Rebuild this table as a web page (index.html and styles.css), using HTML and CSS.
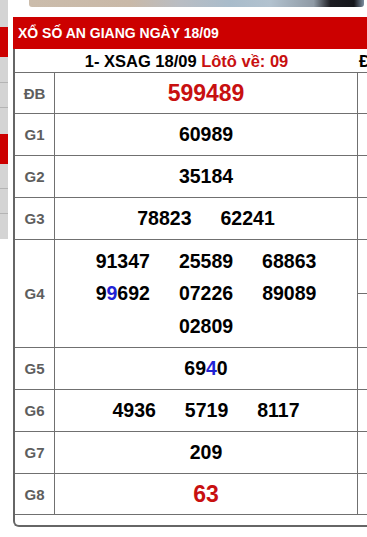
FILE: index.html
```html
<!DOCTYPE html>
<html lang="vi">
<head>
<meta charset="utf-8">
<title>XSAG 18/09</title>
<link rel="stylesheet" href="styles.css">
</head>
<body>
<div class="page">
  <aside class="side">
    <div class="side-item h27"></div>
    <div class="side-item red h30"></div>
    <div class="side-item h26 line"></div>
    <div class="side-item h25 line"></div>
    <div class="side-item h26"></div>
    <div class="side-item red h30"></div>
    <div class="side-item h25 line"></div>
    <div class="side-item h25 line"></div>
    <div class="side-item h25"></div>
  </aside>
  <main class="main">
    <div class="photo"></div>
    <section class="result">
      <h2 class="result-title">XỔ SỐ AN GIANG NGÀY 18/09</h2>
      <div class="result-body">
        <div class="grid">
          <div class="sub">1- XSAG 18/09 <span class="red-text">Lôtô về: 09</span></div>
          <div class="sub-side">Đầu</div>

          <div class="label">ĐB</div>
          <div class="nums"><span class="special">599489</span></div>
          <div class="extra"></div>

          <div class="label">G1</div>
          <div class="nums"><span>60989</span></div>
          <div class="extra"></div>

          <div class="label">G2</div>
          <div class="nums"><span>35184</span></div>
          <div class="extra"></div>

          <div class="label">G3</div>
          <div class="nums"><span>78823</span><span>62241</span></div>
          <div class="extra"></div>

          <div class="label">G4</div>
          <div class="nums stack">
            <div class="line4"><span>91347</span><span>25589</span><span>68863</span></div>
            <div class="line4"><span>9<b class="blue">9</b>692</span><span>07226</span><span>89089</span></div>
            <div class="line4"><span>02809</span></div>
          </div>
          <div class="extra split"><div class="extra-top"></div><div class="extra-bottom"></div></div>

          <div class="label">G5</div>
          <div class="nums"><span>69<b class="blue">4</b>0</span></div>
          <div class="extra"></div>

          <div class="label">G6</div>
          <div class="nums"><span>4936</span><span>5719</span><span>8117</span></div>
          <div class="extra"></div>

          <div class="label">G7</div>
          <div class="nums"><span>209</span></div>
          <div class="extra"></div>

          <div class="label">G8</div>
          <div class="nums"><span class="special">63</span></div>
          <div class="extra"></div>
        </div>
      </div>
    </section>
  </main>
</div>
</body>
</html>
```

FILE: styles.css
```css
html, body {
  margin: 0;
  padding: 0;
  overflow: hidden;
  background: #ffffff;
}

body {
  font-family: "Liberation Sans", Arial, sans-serif;
  width: 367px;
  height: 537px;
}

.page {
  display: flex;
  align-items: flex-start;
  gap: 5px;
}

.side {
  width: 8px;
  flex: none;
  display: flex;
  flex-direction: column;
}

.side-item {
  background: #d4d4d4;
  box-sizing: border-box;
}

.side-item.red { background: #cc0000; }
.side-item.line { border-bottom: 1px solid #b4b4b4; }
.h25 { height: 25px; }
.h26 { height: 26px; }
.h27 { height: 27px; }
.h30 { height: 30px; }

.main {
  flex: 1;
  min-width: 0;
}

.photo {
  margin-left: 16px;
  width: 335px;
  height: 7px;
  margin-bottom: 10px;
  border-radius: 0 0 3px 3px;
  background: linear-gradient(90deg,
    #cbbcab 0%,
    #c9b9a8 30%,
    #b9bdc3 45%,
    #a9bccb 60%,
    #b2c2cf 72%,
    #8f9aa5 85%,
    #1c1d22 90%,
    #15161b 97%,
    #7c8ea0 100%);
}

.result-title {
  margin: 0;
  height: 32px;
  line-height: 33px;
  background: #cc0000;
  color: #ffffff;
  font-size: 14px;
  font-weight: bold;
  padding-left: 5px;
  white-space: nowrap;
}

.result-body {
  border-left: 2px solid #666666;
  border-bottom: 2px solid #666666;
  border-bottom-left-radius: 6px;
  padding-bottom: 10px;
}

.grid {
  display: grid;
  grid-template-columns: 40px 303px minmax(0, 1fr);
  grid-template-rows: 24px 41px 42px 42px 42px 108px 42px 42px 42px 41px;
}

.grid > div {
  box-sizing: border-box;
  border-bottom: 1px solid #707070;
}

.sub {
  grid-column: 1 / 3;
  display: flex;
  align-items: center;
  justify-content: center;
  font-size: 16.5px;
  font-weight: bold;
  color: #000000;
  white-space: pre;
  padding-top: 1px;
}

.red-text { color: #c81010; }

.sub-side {
  overflow: hidden;
  white-space: nowrap;
  font-size: 16.5px;
  font-weight: bold;
  padding-left: 1px;
  padding-top: 3px;
  color: #000000;
}

.label {
  border-right: 1px solid #707070;
  display: flex;
  align-items: center;
  justify-content: center;
  font-size: 15px;
  font-weight: bold;
  color: #5e5e5e;
}

.nums {
  border-right: 1px solid #707070;
  display: flex;
  align-items: center;
  justify-content: center;
  gap: 29px;
  font-size: 19.5px;
  font-weight: bold;
  color: #000000;
}

.nums b { font-weight: bold; }

.nums .special {
  font-size: 23px;
  color: #c81010;
}

.blue { color: #2222d4; }

.nums.stack {
  flex-direction: column;
  gap: 0;
}

.line4 {
  display: flex;
  justify-content: center;
  gap: 29px;
  height: 32.5px;
  line-height: 32.5px;
}

.extra.split {
  display: flex;
  flex-direction: column;
}

.extra-top {
  height: 54px;
  box-sizing: border-box;
  border-bottom: 1px solid #707070;
}

.extra-bottom {
  flex: 1;
}
```
